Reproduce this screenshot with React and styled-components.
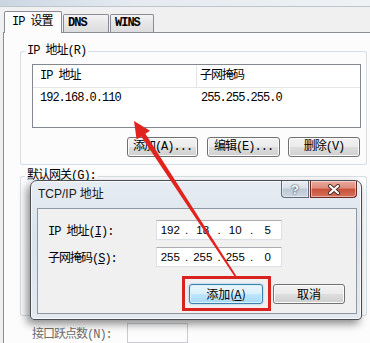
import React from 'react'
import styled, { createGlobalStyle } from 'styled-components'

const mono = `"Liberation Mono", "Noto Sans CJK SC", monospace`
const sans = `"Liberation Sans", "Noto Sans CJK SC", sans-serif`
const cjk = `"Noto Sans CJK SC", "Liberation Sans", sans-serif`

const Global = createGlobalStyle`
    html, body {
        margin: 0;
        padding: 0;
        background: #f0f0f0;
    }
    body {
        font-family: ${mono};
        font-size: 12px;
        letter-spacing: -1px;
        color: #000;
    }
    * { box-sizing: border-box; }
`

const Window = styled.div`
    position: relative;
    width: 370px;
    height: 343px;
    overflow: hidden;
    background: #f0f0f0;
    display: flex;
    flex-direction: column;
`

const TopStrip = styled.div`
    height: 7px;
    background: linear-gradient(90deg, #cbd6e2 0%, #e4eaf0 35%, #eef2f5 100%);
    border-bottom: 1px solid #bcc4cc;
`

const TabRow = styled.div`
    height: 27px;
    display: flex;
    align-items: flex-end;
    gap: 1px;
    padding-left: 4px;
`

const Tab = styled.div`
    position: relative;
    width: ${p => p.$w}px;
    height: ${p => (p.$active ? 22 : 18)}px;
    margin-bottom: ${p => (p.$active ? -1 : 0)}px;
    z-index: ${p => (p.$active ? 2 : 1)};
    padding-left: ${p => (p.$active ? 7 : 4)}px;
    line-height: ${p => (p.$active ? 20 : 17)}px;
    border: 1px solid #898c95;
    border-bottom: none;
    border-radius: 2px 2px 0 0;
    background: ${p => (p.$active ? '#fcfcfc' : 'linear-gradient(#f4f4f4, #e6e6e6 50%, #dcdcdc)')};
    font-weight: ${p => (p.$active ? 'normal' : 'bold')};
`

const Panel = styled.div`
    flex: 1;
    margin-left: 3px;
    background: #fcfcfc;
    border-left: 1px solid #898c95;
    border-top: 1px solid #898c95;
    display: flex;
    flex-direction: column;
`

const line = '#d5dfe5'

const GroupHead = styled.div`
    display: flex;
    height: 14px;
    margin: ${p => p.$top}px 3px 0 16px;
    &::before {
        content: '';
        width: 4px;
        margin-top: 7px;
        border-top: 1px solid ${line};
        border-left: 1px solid ${line};
        border-top-left-radius: 3px;
    }
    &::after {
        content: '';
        flex: 1;
        margin-top: 7px;
        border-top: 1px solid ${line};
        border-right: 1px solid ${line};
        border-top-right-radius: 3px;
    }
`

const GroupTitle = styled.span`
    padding: 0 2px;
    line-height: 14px;
    white-space: nowrap;
`

const GroupBody = styled.div`
    margin: 0 3px 0 16px;
    padding: 6px 5px 7px 11px;
    border: 1px solid ${line};
    border-top: none;
    border-radius: 0 0 3px 3px;
    height: ${p => (p.$h ? `${p.$h}px` : 'auto')};
`

const ListBox = styled.div`
    height: 64px;
    border: 1px solid #828790;
    background: #fff;
`

const ListRow = styled.div`
    display: grid;
    grid-template-columns: 163px 1fr;
    height: ${p => (p.$head ? 23 : 20)}px;
    line-height: ${p => (p.$head ? 22 : 20)}px;
    border-bottom: ${p => (p.$head ? '1px solid #e5e5e5' : 'none')};
`

const Cell = styled.div`
    padding-left: ${p => p.$pad}px;
    border-left: ${p => (p.$divider ? '1px solid #e5e5e5' : 'none')};
    white-space: nowrap;
`

const ButtonRow = styled.div`
    display: flex;
    justify-content: flex-end;
    gap: 8px;
    margin-top: 9px;
    padding-right: 1px;
`

const Button = styled.div`
    width: ${p => p.$w}px;
    height: 20px;
    line-height: 18px;
    text-align: center;
    border: 1px solid #707070;
    border-radius: 3px;
    background: linear-gradient(#f2f2f2 0%, #ebebeb 50%, #dddddd 51%, #cfcfcf 100%);
    box-shadow: inset 0 0 0 1px #fcfcfc;
    white-space: nowrap;
    margin-left: ${p => p.$ml || 0}px;
`

const MetricRow = styled.div`
    display: flex;
    align-items: center;
    gap: 15px;
    margin-top: 7px;
    padding-left: 28px;
    color: #6d6d6d;
`

const MetricBox = styled.div`
    width: 61px;
    height: 20px;
    border: 1px solid #c9cdd2;
    background: #fcfcfc;
`

/* dialog window over the page */
const Dialog = styled.div`
    position: absolute;
    left: 30px;
    top: 180px;
    width: 332px;
    height: 140px;
    z-index: 5;
    display: flex;
    flex-direction: column;
    padding: 0 4px 5px 6px;
    border: 1px solid #474e56;
    border-radius: 7px 7px 4px 4px;
    background: linear-gradient(180deg, #e6ecf2 0%, #dae3ec 40%, #e3e9ef 100%);
    box-shadow: inset 0 0 0 1px rgba(255, 255, 255, 0.7), -3px 4px 9px rgba(0, 0, 0, 0.45);
`

const TitleBar = styled.div`
    height: 27px;
    display: flex;
    justify-content: space-between;
    align-items: flex-start;
`

const Title = styled.div`
    margin-top: 6px;
    padding-left: 1px;
    line-height: 14px;
    font-family: ${sans};
    letter-spacing: 0;
    color: #1a1a1a;
`

const Caption = styled.div`
    display: flex;
    gap: 1px;
`

const CapButton = styled.div`
    width: ${p => p.$w}px;
    height: 17px;
    display: flex;
    align-items: center;
    justify-content: center;
    border: 1px solid ${p => (p.$close ? '#6e2a20' : '#5f6b78')};
    border-top: none;
    border-radius: ${p => (p.$close ? '0 0 4px 0' : '0 0 0 4px')};
    background: ${p => (p.$close
        ? 'linear-gradient(#e9a99b 0%, #dd8c7a 45%, #c8503a 50%, #d4705a 100%)'
        : 'linear-gradient(#e9eef3 0%, #d7dfe7 45%, #bcc8d4 50%, #cbd6e0 100%)')};
    box-shadow: inset 0 0 0 1px rgba(255, 255, 255, 0.45);
    font-family: ${sans};
    font-weight: bold;
    font-size: 13px;
    letter-spacing: 0;
    color: #fff;
    text-shadow: 0 0 2px #38404a, 0 0 1px #38404a;
`

const Client = styled.div`
    flex: 1;
    background: #f0f0f0;
    border: 1px solid #8d98a4;
    padding: 11px 11px 0 10px;
    display: flex;
    flex-direction: column;
    gap: 7px;
`

const FieldRow = styled.div`
    display: flex;
    align-items: center;
    height: 20px;
`

const FieldLabel = styled.div`
    width: 108px;
    white-space: nowrap;
`

const IpBox = styled.div`
    width: 126px;
    height: 20px;
    display: flex;
    align-items: center;
    background: #fff;
    border: 1px solid #dbdfe6;
    border-top-color: #abadb3;
    font-family: ${sans};
    font-size: 11.5px;
    letter-spacing: 0;
`

const Seg = styled.span`
    flex: 1;
    text-align: center;
`

const Dot = styled.span`
    width: 6px;
    text-align: center;
`

const DialogButtons = styled.div`
    display: flex;
    justify-content: flex-end;
    align-items: center;
    margin-top: 2px;
`

const Highlight = styled.div`
    border: 3px solid #d8231f;
    padding: 5px 5px 4px 4px;
`

const DlgButton = styled(Button)`
    font-family: ${cjk};
    letter-spacing: 0;
    line-height: 17px;
    ${p => p.$default && `
        border-color: #3c7fb1;
        background: linear-gradient(#eaf6fd 0%, #d9f0fc 50%, #bee6fd 51%, #a7d9f5 100%);
        box-shadow: inset 0 0 0 1px #d8f1fd, 0 0 2px #6fb6e6;
    `}
`

const Overlay = styled.svg`
    position: absolute;
    left: 0;
    top: 0;
    z-index: 10;
    pointer-events: none;
`

function IpField({ parts }) {
    return (
        <IpBox>
            {parts.map((v, i) => (
                <React.Fragment key={i}>
                    {i > 0 && <Dot>.</Dot>}
                    <Seg>{v}</Seg>
                </React.Fragment>
            ))}
        </IpBox>
    )
}

export default function App() {
    return (
        <Window>
            <Global />
            <TopStrip />
            <TabRow>
                <Tab $active $w={58}>IP 设置</Tab>
                <Tab $w={46}>DNS</Tab>
                <Tab $w={44}>WINS</Tab>
            </TabRow>
            <Panel>
                <GroupHead $top={11}>
                    <GroupTitle>IP 地址(R)</GroupTitle>
                </GroupHead>
                <GroupBody>
                    <ListBox>
                        <ListRow $head>
                            <Cell $pad={7}>IP 地址</Cell>
                            <Cell $pad={3} $divider>子网掩码</Cell>
                        </ListRow>
                        <ListRow>
                            <Cell $pad={7}>192.168.0.110</Cell>
                            <Cell $pad={5}>255.255.255.0</Cell>
                        </ListRow>
                    </ListBox>
                    <ButtonRow>
                        <Button $w={71}>添加(A)...</Button>
                        <Button $w={73} $ml={1}>编辑(E)...</Button>
                        <Button $w={72}>删除(V)</Button>
                    </ButtonRow>
                </GroupBody>
                <GroupHead $top={4}>
                    <GroupTitle>默认网关(G):</GroupTitle>
                </GroupHead>
                <GroupBody $h={133} />
                <MetricRow>
                    <span>接口跃点数(N):</span>
                    <MetricBox />
                </MetricRow>
            </Panel>

            <Dialog>
                <TitleBar>
                    <Title>TCP/IP 地址</Title>
                    <Caption>
                        <CapButton $w={28}>?</CapButton>
                        <CapButton $w={47} $close>
                            <svg width="14" height="11" viewBox="0 0 14 11">
                                <path d="M3 2 L11 9 M11 2 L3 9" stroke="#4a2a24" strokeWidth="4" strokeLinecap="round" />
                                <path d="M3 2 L11 9 M11 2 L3 9" stroke="#fff" strokeWidth="2.2" strokeLinecap="round" />
                            </svg>
                        </CapButton>
                    </Caption>
                </TitleBar>
                <Client>
                    <FieldRow>
                        <FieldLabel>IP 地址(<u>I</u>):</FieldLabel>
                        <IpField parts={['192', '18', '10', '5']} />
                    </FieldRow>
                    <FieldRow>
                        <FieldLabel>子网掩码(<u>S</u>):</FieldLabel>
                        <IpField parts={['255', '255', '255', '0']} />
                    </FieldRow>
                    <DialogButtons>
                        <Highlight>
                            <DlgButton $w={74} $default>添加(<u>A</u>)</DlgButton>
                        </Highlight>
                        <DlgButton $w={72} $ml={2}>取消</DlgButton>
                    </DialogButtons>
                </Client>
            </Dialog>

            <Overlay width="370" height="343" viewBox="0 0 370 343">
                <polygon
                    points="134,121 150,130.8 145.4,133.8 236.7,276.6 235.3,277.4 141.2,136.6 136.6,139.6"
                    fill="#e2231d"
                />
            </Overlay>
        </Window>
    )
}
